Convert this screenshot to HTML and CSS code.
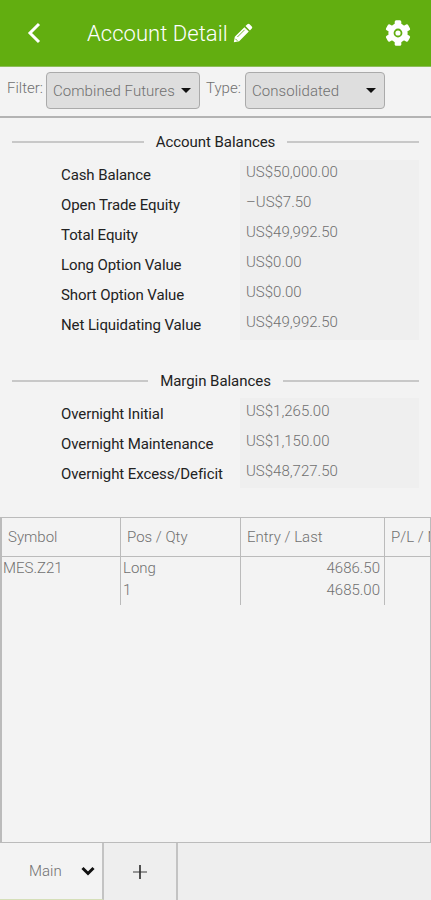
FILE: index.html
```html
<!DOCTYPE html>
<html lang="en">
<head>
<meta charset="utf-8">
<meta name="viewport" content="width=device-width, initial-scale=1">
<title>Account Detail</title>
<link rel="stylesheet" href="styles.css">
</head>
<body>
<div class="app">
  <header class="topbar">
    <svg class="back" width="14" height="22" viewBox="0 0 14 22"><path d="M12 2 3 11l9 9" fill="none" stroke="#fff" stroke-width="3"/></svg>
    <h1>Account Detail</h1>
    <svg class="pencil" width="20" height="20" viewBox="0 0 20 20"><path d="M.8 19.2l1-5.4L11.4 4.2l4.4 4.4-9.6 9.6zM12.5 3.1l1.9-1.9q1.1-1 2.2 0l2.2 2.2q1 1.1 0 2.2l-1.9 1.9z" fill="#fff"/><path d="M4.4 14 11.6 6.800M2.400 15.800l2 2" stroke="#62ae10" stroke-width=".9"/></svg>
    <svg class="gear" width="26" height="26" viewBox="0 0 26 26"><g fill="#fff"><circle cx="13" cy="13" r="9.700"/><rect x="9.700" y=".3" width="6.600" height="25.400" rx="1.500"/><rect x="9.700" y=".3" width="6.600" height="25.400" rx="1.500" transform="rotate(60 13 13)"/><rect x="9.700" y=".3" width="6.600" height="25.400" rx="1.500" transform="rotate(120 13 13)"/></g><circle cx="13" cy="13" r="3.500" fill="none" stroke="#62ae10" stroke-width="1.800"/></svg>
  </header>
  <section class="filters">
    <span class="filter-label">Filter:</span>
    <div class="select wide"><span>Combined Futures</span><i class="caret"></i></div>
    <span class="filter-label type">Type:</span>
    <div class="select"><span>Consolidated</span><i class="caret"></i></div>
  </section>
  <section class="balances account">
    <h2><span>Account Balances</span></h2>
    <dl>
      <dt>Cash Balance</dt><dd>US$50,000.00</dd>
      <dt>Open Trade Equity</dt><dd>–US$7.50</dd>
      <dt>Total Equity</dt><dd>US$49,992.50</dd>
      <dt>Long Option Value</dt><dd>US$0.00</dd>
      <dt>Short Option Value</dt><dd>US$0.00</dd>
      <dt>Net Liquidating Value</dt><dd>US$49,992.50</dd>
    </dl>
  </section>
  <section class="balances margin">
    <h2><span>Margin Balances</span></h2>
    <dl>
      <dt>Overnight Initial</dt><dd>US$1,265.00</dd>
      <dt>Overnight Maintenance</dt><dd>US$1,150.00</dd>
      <dt>Overnight Excess/Deficit</dt><dd>US$48,727.50</dd>
    </dl>
  </section>
  <section class="positions">
    <div class="row head"><div>Symbol</div><div>Pos / Qty</div><div>Entry / Last</div><div>P/L / Net</div></div>
    <div class="row data"><div>MES.Z21</div><div>Long<br>1</div><div class="num">4686.50<br>4685.00</div><div></div></div>
  </section>
  <nav class="tabs">
    <div class="tab main"><span>Main</span><svg width="14" height="10" viewBox="0 0 14 10"><path d="M1.500 2 7 7.500 12.500 2" fill="none" stroke="#111" stroke-width="3"/></svg></div>
    <div class="tab add"><svg width="14" height="14" viewBox="0 0 14 14"><path d="M0 7h14" stroke="#777" stroke-width="1.500"/><path d="M7 0v14" stroke="#333" stroke-width="1.700"/></svg></div>
  </nav>
</div>
</body>
</html>
```
FILE: styles.css
```css
* { box-sizing: border-box; }
body { margin: 0; background: #f3f3f3; font-family: Roboto, sans-serif; font-size: 15px; font-weight: 300; color: #707070; }
h1, h2, dl, dd { margin: 0; font-weight: inherit; }
.app { width: 431px; height: 900px; display: flex; flex-direction: column; overflow: hidden; }
svg { display: block; flex: none; }
.topbar { height: 67px; flex: none; display: flex; align-items: center; padding: 0 20px 0 27px; background: #62ae10; border-bottom: 1px solid #8cbd5a; color: #fff; }
h1 { margin-left: 46px; padding-top: 2px; width: 141px; font-size: 22px; line-height: 30px; letter-spacing: .05px; white-space: nowrap; }
.pencil { margin-left: 5px; }
.gear { margin-left: auto; }
.filters { height: 51px; flex: none; display: flex; align-items: flex-start; padding: 5px 0 0 7px; border-bottom: 2px solid #b3b3b3; }
.filter-label { width: 39px; line-height: 32px; white-space: nowrap; }
.type { margin-left: 6px; }
.select { width: 140px; height: 37px; display: flex; align-items: center; justify-content: space-between; padding: 0 8px 0 6px; background: #dedede; border: 1px solid #aaa; border-radius: 4px; white-space: nowrap; letter-spacing: .05px; }
.wide { width: 154px; }
.caret { border: 5px solid transparent; border-top-color: #111; border-bottom: 0; }
.balances { flex: none; padding: 0 12px; color: #222; }
.account { padding-top: 14px; height: 253px; }
.margin { height: 146px; }
h2 { display: flex; align-items: center; gap: 12px; font-size: 15px; line-height: 20px; font-weight: 400; letter-spacing: -.05px; }
h2::before, h2::after { content: ""; height: 2px; flex: 1; background: #c8c8c8; }
h2 span { white-space: nowrap; }
dl { display: grid; grid-template-columns: 179px 179px; grid-auto-rows: 30px; margin: 8px 0 0 49px; }
.margin dl { margin-top: 7px; }
dt { line-height: 31px; font-weight: 400; letter-spacing: -.1px; white-space: nowrap; }
.margin dt { line-height: 32px; }
dd { padding-left: 6px; line-height: 25px; background: #efefef; color: #707070; }
.margin dd { line-height: 26px; }
.positions { flex: 1; border: 1px solid #bbb; border-left-width: 2px; overflow: hidden; }
.row { display: grid; grid-template-columns: 119px 120px 144px 120px; }
.row > div { border-right: 1px solid #bbb; white-space: nowrap; }
.head { border-bottom: 1px solid #bbb; }
.head > div { height: 38px; line-height: 38px; padding-left: 6px; }
.data > div { height: 48px; line-height: 23px; padding: 0 4px 0 2px; }
.data > div { line-height: 22px; }
.data .num { text-align: right; }
.data > div:first-child { padding-left: 1px; }
.tabs { height: 57px; flex: none; display: flex; background: #eee; }
.tab { height: 57px; display: flex; align-items: center; border-right: 2px solid #c3c3c3; }
.main { width: 104px; padding-left: 29px; background: #f3f3f3; border-bottom: 1px solid #d5dfb8; }
.main span { width: 52px; }
.add { width: 74px; justify-content: center; }
```
